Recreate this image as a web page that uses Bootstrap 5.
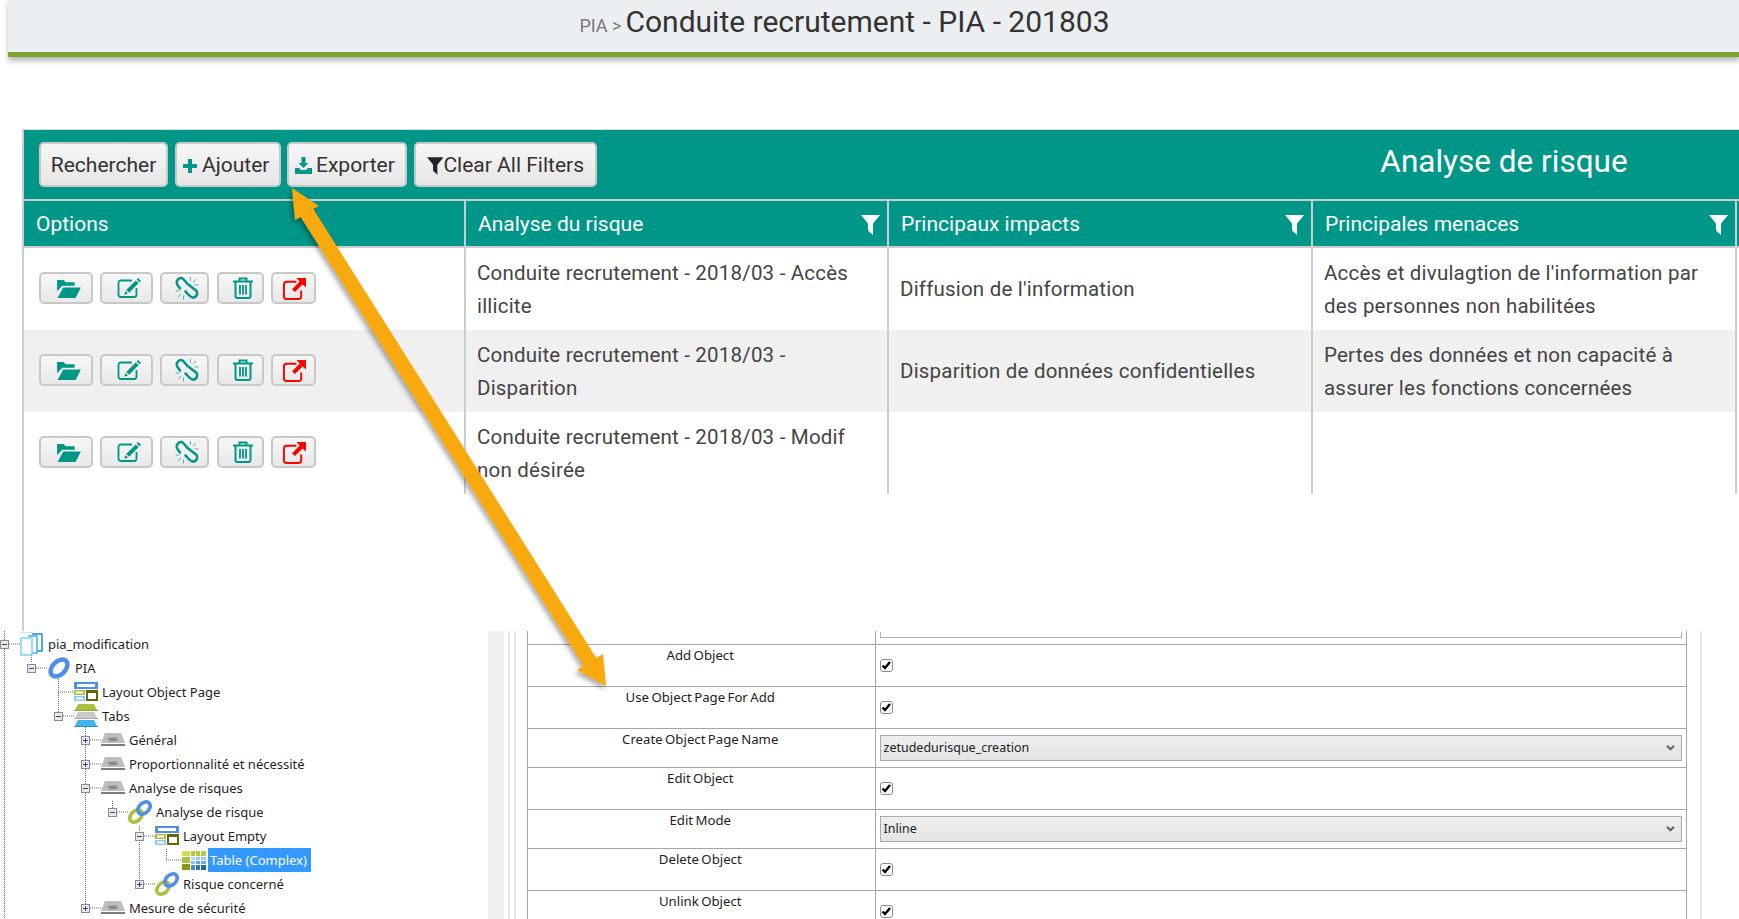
<!DOCTYPE html>
<html lang="fr">
<head>
<meta charset="utf-8">
<title>Conduite recrutement - PIA - 201803</title>
<link href="https://cdn.jsdelivr.net/npm/bootstrap@5.3.0/dist/css/bootstrap.min.css" rel="stylesheet">
<style>
html,body{margin:0;background:#fff;overflow:hidden}
.shot{position:relative;width:1739px;height:919px;overflow:hidden;font-family:Roboto,sans-serif}
.page-head{margin-left:8px;height:57px;background:#eceff1;border-bottom:5px solid #7da32f;box-shadow:0 4px 5px rgba(0,0,0,.28);padding-right:58px;padding-top:3px;line-height:38px;color:#333}
.crumb{font-size:18px;color:#777}
.head-title{font-size:30px;color:#333}
.panel-wrap{margin-top:72px;margin-left:22px;height:502px;border-left:2px solid #cfcfcf}
.tool-bar{height:70px;background:#009688;border-top:1px solid #ddd;padding:12px 0 0 15px;gap:7px}
.tool-btn{height:45px;padding:2px 10px 0;font-size:21px;line-height:1;color:#333;border:2px solid #c8c8c8;border-radius:5px;background:linear-gradient(#f6f6f6,#e6e6e6);white-space:nowrap}
.t-r{width:129px}.t-a{width:106px;padding:2px 6px 0;gap:5px}.t-e{width:120px;padding:2px 6px 0;gap:4px;margin-left:-1px}.t-c{width:183px;padding:2px 11px 0}
.panel-title{width:470px;margin-left:auto;font-size:31.5px;color:#fff;text-align:center;line-height:40px}
.risk-table{table-layout:fixed;width:1715px;margin:0;font-size:20.5px;--bs-table-bg:transparent;border-collapse:separate;border-spacing:0}
.risk-table th{height:49px;background:#009688;color:#fff;font-size:21px;font-weight:400;border-top:2px solid #ccc;border-bottom:2px solid #ccc;border-right:2px solid #ccc;padding:3px 7px 0 12px;vertical-align:middle;box-shadow:none}
.risk-table th.tail,.risk-table td.tail{border-right:0;padding:0}
.risk-table td{height:82px;line-height:33px;color:#444;border:0;border-right:2px solid #ccc;padding:1px 10px 0 11px;vertical-align:middle;letter-spacing:.2px;box-shadow:none}
.risk-table tr.alt td{background:#f0f0f0}
.risk-table td.tail{background:#fff!important}
.risk-table td.opt{padding:0 0 2px 15px}
.opt-row{gap:7px}
.ibtn{height:32px;padding:0 0 0 5px;border:2px solid #c8c8c8;border-radius:5px;background:linear-gradient(#f7f7f7,#e8e8e8);line-height:1}
.i1{width:54px}.i2{width:53px}.i3{width:49px}.i4{width:47px;margin-left:1px}.i5{width:45px;padding:0}
.tl{color:#009688}
.lower{height:288px;font-family:"Noto Sans",sans-serif}
.tree{position:relative;width:488px;flex:none;font-size:13px;color:#1f1f1f}
.tree-lines{position:absolute;left:0;top:0}
.tree-row{position:relative;height:24px;line-height:24px;white-space:nowrap}
.t0{margin-top:1px}
.l1{padding-left:27px}.l2{padding-left:54px}.l3{padding-left:81px}.l4{padding-left:108px}.l5{padding-left:135px}.l6{padding-left:162px}
.xp{width:20px;flex:none;height:24px;display:flex;align-items:center}
.ti{width:28px;flex:none;height:24px;display:flex;align-items:center}
.sel-node{background:#3399ff;color:#fff;padding:0 4px 0 2px;margin-left:-2px;height:24px}
.strip{width:16px;flex:none;background:#f0f0f0}
.vline{width:2px;flex:none;background:#e3e3e3}
.prop-box{width:1160px;flex:none;border-left:1px solid #a6a6a6;border-right:1px solid #a6a6a6;margin-left:11px}
.prop-table{table-layout:fixed;width:100%;margin:0;font-size:12px;color:#222;border-collapse:collapse;--bs-table-bg:transparent}
.prop-table td{border:0;border-top:1px solid #a6a6a6;padding:0;box-shadow:none}
.prop-table td.lbl{width:347px;border-right:1px solid #a6a6a6;text-align:center;vertical-align:top;padding:1px 2px 0 0;font-size:13.2px;line-height:18px;word-spacing:-1px}
.prop-table td.ctl{padding:0 4px;vertical-align:middle}
.prop-table tr.tall td{height:42px}
.prop-table tr.low td{height:39px}
.prop-table tr.first td{height:13px;border-top:0}
.first-box{height:6px;border:1px solid #b0b0b0;border-top:0}
.prop-check{width:13px;height:13px;margin:1px 0 0;border:1px solid #8a8a8a;border-radius:0;display:block}
.prop-check.form-check-input:checked[type=checkbox]{--bs-form-check-bg-image:url("data:image/svg+xml,%3csvg xmlns='http://www.w3.org/2000/svg' viewBox='0 0 13 13'%3e%3cpath fill='none' stroke='%23000' stroke-width='2.400' d='M2.500 6.500l2.500 2.500 5-6'/%3e%3c/svg%3e");background-color:#fff;border-color:#8a8a8a;background-size:13px 13px}
.prop-select{height:26px;padding:1px 24px 0 3px;font-size:12.5px;color:#222;border:1px solid #aaa;border-radius:0;background-color:#e9e9e9;background-image:url("data:image/svg+xml,%3csvg xmlns='http://www.w3.org/2000/svg' viewBox='0 0 10 8'%3e%3cpath fill='none' stroke='%23666' stroke-width='2.400' d='M1 2l4 4 4-4'/%3e%3c/svg%3e"),linear-gradient(#eeeeee,#e4e4e4);background-position:right 6px center,0 0;background-size:9px 7px,100% 100%;background-repeat:no-repeat}
.arrow-layer{position:absolute;left:0;top:0;pointer-events:none}
</style>
</head>
<body>
<svg width="0" height="0" class="position-absolute">
<defs>
<symbol id="s-folder" viewBox="0 0 26 20"><path fill="currentColor" d="M1 1h7l2 2.500h9.500v3.500H6.500L1 13z"/><path fill="currentColor" d="M7.500 9H26l-5.500 11H1.500z"/></symbol>
<symbol id="s-edit" viewBox="0 0 24 20"><path fill="none" stroke="currentColor" stroke-width="1.800" d="M15 2.500H4a2.500 2.500 0 0 0-2.500 2.500v11.500A2.500 2.500 0 0 0 4 19h13a2.500 2.500 0 0 0 2.500-2.500V10"/><path fill="currentColor" d="M21 0l3 2.700-1.400 1.500-3-2.700zM18.700 2.400l3 2.700-9.500 9.700-3-2.700zM8.500 13l2.500 2.500-3.800 1.200z"/></symbol>
<symbol id="s-unlink" viewBox="0 0 24 24"><path fill="none" stroke="currentColor" stroke-width="2.500" stroke-linecap="round" d="M5 12.500L2.500 9C.5 6 3 1.500 6.500 2 8.500 2.500 10 5 12 7.500L21 14.500C23.500 17 21.500 22 17.500 21.500 15 21 13 18 10.500 15.500"/><path fill="none" stroke="currentColor" stroke-width="1" opacity=".65" d="M15.500 1v4M21 3l-3 3M23.500 9h-4M.5 15h4M3 21l3-3M8.500 23.500v-4"/></symbol>
<symbol id="s-trash" viewBox="0 0 20 22"><path fill="none" stroke="currentColor" stroke-width="2" d="M0 4.500h20M6.500 4V1.500h7V4M2.500 5v14a2 2 0 0 0 2 2h11a2 2 0 0 0 2-2V5"/><path stroke="currentColor" stroke-width="1.800" d="M7 8v9.500M10 8v9.500M13 8v9.500"/></symbol>
<symbol id="s-ext" viewBox="0 0 25 24"><path fill="none" stroke="#f00" stroke-width="2" d="M15 5H5a3 3 0 0 0-3 3v12a3 3 0 0 0 3 3h12a3 3 0 0 0 3-3v-6"/><path fill="#f00" d="M15 1h10v10l-3.500-3.300-8 8-3-3 8-8z"/></symbol>
<symbol id="s-funnel" viewBox="0 0 19 20"><path fill="currentColor" d="M0 0h19l-7 8.500V20l-5-4.500v-7z"/></symbol>
<symbol id="s-page" viewBox="0 0 24 24"><path fill="#fff" stroke="#1b8fc9" stroke-width="1.500" d="M12 2h10v17h-5"/><path fill="#fff" stroke="#3fb0e8" stroke-width="1.500" d="M8 4h9v17h-5"/><rect x="1" y="6" width="11" height="17" fill="#fff" stroke="#7fd0f5" stroke-width="1.500"/><path stroke="#bfe6f8" d="M0 .5h12"/></symbol>
<symbol id="s-ring" viewBox="0 0 24 24"><ellipse cx="12" cy="12" rx="10" ry="6.500" transform="rotate(-45 12 12)" fill="none" stroke="#4f8fe6" stroke-width="4.500"/></symbol>
<symbol id="s-layout" viewBox="0 0 24 20"><rect width="24" height="7" fill="#4f8fe6"/><rect x="3" y="2" width="18" height="3" fill="#fff"/><rect y="8" width="11" height="5" fill="#a9c23f"/><rect x="2" y="9.500" width="7" height="2" fill="#fff"/><rect y="14" width="11" height="5" fill="#8ccbf5"/><rect x="2" y="15.500" width="7" height="2" fill="#fff"/><rect x="12" y="8" width="12" height="11" fill="#66660a"/><rect x="14" y="11" width="8" height="6" fill="#fff"/></symbol>
<symbol id="s-tabs" viewBox="0 0 24 24"><path fill="#a9c23f" d="M4 0h16l3 6H1z"/><rect y="6" width="24" height="1" fill="#8fa52f"/><path fill="#c9c9c9" d="M4 8h16l3 6H1z"/><rect y="14" width="24" height="1" fill="#aaa"/><path fill="#3fb5ee" d="M4 16h16l3 6H1z"/><rect y="22" width="24" height="1" fill="#2b93c7"/></symbol>
<symbol id="s-tab" viewBox="0 0 24 14"><path fill="#bdbdbd" d="M4 0h16l4 10H0z"/><rect y="11" width="24" height="2" fill="#7d7d7d"/><text x="12" y="8" text-anchor="middle" font-size="6" font-weight="700" fill="#666" font-family="Liberation Sans">tab</text></symbol>
<symbol id="s-link" viewBox="0 0 24 24"><ellipse cx="8" cy="16" rx="7.200" ry="5" transform="rotate(-45 8 16)" fill="none" stroke="#a9c23f" stroke-width="3.600"/><ellipse cx="16" cy="8" rx="7.200" ry="5" transform="rotate(-45 16 8)" fill="none" stroke="#4f8fe6" stroke-width="3.600"/></symbol>
<symbol id="s-grid" viewBox="0 0 24 19"><rect width="8" height="5" fill="#cfdf4f"/><rect y="6" width="8" height="6" fill="#a9c23f"/><rect y="13" width="8" height="6" fill="#8a9a10"/><rect x="9" width="4" height="5" fill="#b9c93f"/><rect x="14" width="4" height="5" fill="#b9c93f"/><rect x="19" width="5" height="5" fill="#b9c93f"/><rect x="9" y="6" width="4" height="3" fill="#b5d8f5"/><rect x="14" y="6" width="4" height="3" fill="#9bc9f0"/><rect x="19" y="6" width="5" height="3" fill="#9bc9f0"/><rect x="9" y="10" width="4" height="3" fill="#8cc0ee"/><rect x="14" y="10" width="4" height="3" fill="#6aa9e0"/><rect x="19" y="10" width="5" height="3" fill="#6aa9e0"/><rect x="9" y="14" width="4" height="5" fill="#4a8fcc"/><rect x="14" y="14" width="4" height="5" fill="#2f78b8"/><rect x="19" y="14" width="5" height="5" fill="#1f68a8"/></symbol>
<symbol id="s-minus" viewBox="0 0 9 9"><rect x=".5" y=".5" width="8" height="8" fill="#e8e8e8" stroke="#8a8a8a"/><path stroke="#33448a" d="M2 4.500h5"/></symbol>
<symbol id="s-plus" viewBox="0 0 9 9"><rect x=".5" y=".5" width="8" height="8" fill="#e8e8e8" stroke="#8a8a8a"/><path stroke="#33448a" d="M2 4.500h5M4.500 2v5"/></symbol>
</defs>
</svg>

<div class="shot">
  <header class="page-head text-center">
    <span class="crumb">PIA &gt;</span> <span class="head-title">Conduite recrutement - PIA - 201803</span>
  </header>

  <section class="panel-wrap">
    <div class="tool-bar d-flex align-items-start">
      <button type="button" class="btn tool-btn t-r d-flex align-items-center justify-content-center">Rechercher</button>
      <button type="button" class="btn tool-btn t-a d-flex align-items-center"><svg width="14" height="14" viewBox="0 0 14 14" class="tl"><path fill="currentColor" d="M5 0h4v5h5v4H9v5H5V9H0V5h5z"/></svg>Ajouter</button>
      <button type="button" class="btn tool-btn t-e d-flex align-items-center"><svg width="17" height="17" viewBox="0 0 17 17" class="tl"><path fill="currentColor" d="M6.500 0h4v6h3l-5 5-5-5h3zM0 11h4l2 2h5l2-2h4v6H0z"/></svg>Exporter</button>
      <button type="button" class="btn tool-btn t-c d-flex align-items-center"><svg width="18" height="20" class="text-dark"><use href="#s-funnel"/></svg>Clear All Filters</button>
      <div class="panel-title">Analyse de risque</div>
    </div>
    <table class="table risk-table">
      <colgroup><col style="width:442px"><col style="width:423px"><col style="width:424px"><col style="width:424px"><col></colgroup>
      <thead>
        <tr>
          <th>Options</th>
          <th><div class="d-flex justify-content-between align-items-center">Analyse du risque<svg width="19" height="20"><use href="#s-funnel"/></svg></div></th>
          <th><div class="d-flex justify-content-between align-items-center">Principaux impacts<svg width="19" height="20"><use href="#s-funnel"/></svg></div></th>
          <th><div class="d-flex justify-content-between align-items-center">Principales menaces<svg width="19" height="20"><use href="#s-funnel"/></svg></div></th>
          <th class="tail"></th>
        </tr>
      </thead>
      <tbody>
        <tr>
          <td class="opt"><div class="d-flex opt-row">
            <button type="button" class="btn ibtn i1 tl"><svg width="25" height="19"><use href="#s-folder"/></svg></button>
            <button type="button" class="btn ibtn i2 tl"><svg width="24" height="20"><use href="#s-edit"/></svg></button>
            <button type="button" class="btn ibtn i3 tl"><svg width="24" height="24"><use href="#s-unlink"/></svg></button>
            <button type="button" class="btn ibtn i4 tl"><svg width="20" height="22"><use href="#s-trash"/></svg></button>
            <button type="button" class="btn ibtn i5"><svg width="26" height="23"><use href="#s-ext"/></svg></button>
          </div></td>
          <td>Conduite recrutement - 2018/03 - Accès illicite</td>
          <td>Diffusion de l'information</td>
          <td>Accès et divulagtion de l'information par des personnes non habilitées</td>
          <td class="tail"></td>
        </tr>
        <tr class="alt">
          <td class="opt"><div class="d-flex opt-row">
            <button type="button" class="btn ibtn i1 tl"><svg width="25" height="19"><use href="#s-folder"/></svg></button>
            <button type="button" class="btn ibtn i2 tl"><svg width="24" height="20"><use href="#s-edit"/></svg></button>
            <button type="button" class="btn ibtn i3 tl"><svg width="24" height="24"><use href="#s-unlink"/></svg></button>
            <button type="button" class="btn ibtn i4 tl"><svg width="20" height="22"><use href="#s-trash"/></svg></button>
            <button type="button" class="btn ibtn i5"><svg width="26" height="23"><use href="#s-ext"/></svg></button>
          </div></td>
          <td>Conduite recrutement - 2018/03 - Disparition</td>
          <td>Disparition de données confidentielles</td>
          <td>Pertes des données et non capacité à assurer les fonctions concernées</td>
          <td class="tail"></td>
        </tr>
        <tr>
          <td class="opt"><div class="d-flex opt-row">
            <button type="button" class="btn ibtn i1 tl"><svg width="25" height="19"><use href="#s-folder"/></svg></button>
            <button type="button" class="btn ibtn i2 tl"><svg width="24" height="20"><use href="#s-edit"/></svg></button>
            <button type="button" class="btn ibtn i3 tl"><svg width="24" height="24"><use href="#s-unlink"/></svg></button>
            <button type="button" class="btn ibtn i4 tl"><svg width="20" height="22"><use href="#s-trash"/></svg></button>
            <button type="button" class="btn ibtn i5"><svg width="26" height="23"><use href="#s-ext"/></svg></button>
          </div></td>
          <td>Conduite recrutement - 2018/03 - Modif non désirée</td>
          <td></td>
          <td></td>
          <td class="tail"></td>
        </tr>
      </tbody>
    </table>
  </section>

  <section class="lower d-flex">
    <div class="tree">
      <svg class="tree-lines" width="300" height="288" fill="none" stroke="#666" stroke-dasharray="1 1">
        <path d="M4.500 0V288M31.500 24V32M58.500 48V85M85.500 96V277M112.500 170V181M139.500 195V253M166.500 218V229M9 13H20M36 37H47M58 61H74M63 85H74M90 109H101M90 133H101M90 157H101M117 181H128M144 205H155M166 229H183M144 253H155M90 277H101"/>
      </svg>
      <div class="tree-row d-flex align-items-center t0"><span class="xp"><svg width="9" height="9"><use href="#s-minus"/></svg></span><span class="ti"><svg width="24" height="24"><use href="#s-page"/></svg></span>pia_modification</div>
      <div class="tree-row d-flex align-items-center l1"><span class="xp"><svg width="9" height="9"><use href="#s-minus"/></svg></span><span class="ti"><svg width="24" height="24"><use href="#s-ring"/></svg></span>PIA</div>
      <div class="tree-row d-flex align-items-center l2"><span class="xp"></span><span class="ti"><svg width="24" height="20"><use href="#s-layout"/></svg></span>Layout Object Page</div>
      <div class="tree-row d-flex align-items-center l2"><span class="xp"><svg width="9" height="9"><use href="#s-minus"/></svg></span><span class="ti"><svg width="24" height="24"><use href="#s-tabs"/></svg></span>Tabs</div>
      <div class="tree-row d-flex align-items-center l3"><span class="xp"><svg width="9" height="9"><use href="#s-plus"/></svg></span><span class="ti"><svg width="24" height="14"><use href="#s-tab"/></svg></span>Général</div>
      <div class="tree-row d-flex align-items-center l3"><span class="xp"><svg width="9" height="9"><use href="#s-plus"/></svg></span><span class="ti"><svg width="24" height="14"><use href="#s-tab"/></svg></span>Proportionnalité et nécessité</div>
      <div class="tree-row d-flex align-items-center l3"><span class="xp"><svg width="9" height="9"><use href="#s-minus"/></svg></span><span class="ti"><svg width="24" height="14"><use href="#s-tab"/></svg></span>Analyse de risques</div>
      <div class="tree-row d-flex align-items-center l4"><span class="xp"><svg width="9" height="9"><use href="#s-minus"/></svg></span><span class="ti"><svg width="24" height="24"><use href="#s-link"/></svg></span>Analyse de risque</div>
      <div class="tree-row d-flex align-items-center l5"><span class="xp"><svg width="9" height="9"><use href="#s-minus"/></svg></span><span class="ti"><svg width="24" height="20"><use href="#s-layout"/></svg></span>Layout Empty</div>
      <div class="tree-row d-flex align-items-center l6"><span class="xp"></span><span class="ti"><svg width="24" height="19"><use href="#s-grid"/></svg></span><span class="sel-node">Table (Complex)</span></div>
      <div class="tree-row d-flex align-items-center l5"><span class="xp"><svg width="9" height="9"><use href="#s-plus"/></svg></span><span class="ti"><svg width="24" height="24"><use href="#s-link"/></svg></span>Risque concerné</div>
      <div class="tree-row d-flex align-items-center l3"><span class="xp"><svg width="9" height="9"><use href="#s-plus"/></svg></span><span class="ti"><svg width="24" height="14"><use href="#s-tab"/></svg></span>Mesure de sécurité</div>
    </div>
    <div class="strip"></div>
    <div class="vline ms-1"></div>
    <div class="vline ms-1"></div>
    <div class="prop-box">
      <table class="table prop-table">
        <tbody>
          <tr class="first"><td class="lbl"></td><td class="ctl"><div class="first-box mb-1"></div></td></tr>
          <tr class="tall"><td class="lbl">Add Object</td><td class="ctl"><input class="form-check-input prop-check" type="checkbox" checked aria-label="Add Object"></td></tr>
          <tr class="tall"><td class="lbl">Use Object Page For Add</td><td class="ctl"><input class="form-check-input prop-check" type="checkbox" checked aria-label="Use Object Page For Add"></td></tr>
          <tr class="low"><td class="lbl">Create Object Page Name</td><td class="ctl"><select class="form-select prop-select" aria-label="Create Object Page Name"><option>zetudedurisque_creation</option></select></td></tr>
          <tr class="tall"><td class="lbl">Edit Object</td><td class="ctl"><input class="form-check-input prop-check" type="checkbox" checked aria-label="Edit Object"></td></tr>
          <tr class="low"><td class="lbl">Edit Mode</td><td class="ctl"><select class="form-select prop-select" aria-label="Edit Mode"><option>Inline</option></select></td></tr>
          <tr class="tall"><td class="lbl">Delete Object</td><td class="ctl"><input class="form-check-input prop-check" type="checkbox" checked aria-label="Delete Object"></td></tr>
          <tr class="tall"><td class="lbl">Unlink Object</td><td class="ctl"><input class="form-check-input prop-check" type="checkbox" checked aria-label="Unlink Object"></td></tr>
        </tbody>
      </table>
    </div>
    <div class="vline" style="margin-left:13px"></div>
  </section>

  <svg class="arrow-layer" width="1739" height="919" aria-hidden="true">
    <defs><filter id="arrow-shadow" x="-10%" y="-10%" width="120%" height="120%"><feDropShadow dx="-2" dy="3" stdDeviation="2.500" flood-color="#000" flood-opacity=".35"/></filter></defs>
    <polygon filter="url(#arrow-shadow)" fill="#f8a90b" points="292,188 319,206 313.300,209 596.300,658 603,654 606,686 577,670 583.700,666 300.700,217 295,220"/>
  </svg>
</div>
<script src="https://cdn.jsdelivr.net/npm/bootstrap@5.3.0/dist/js/bootstrap.bundle.min.js"></script>
</body>
</html>
